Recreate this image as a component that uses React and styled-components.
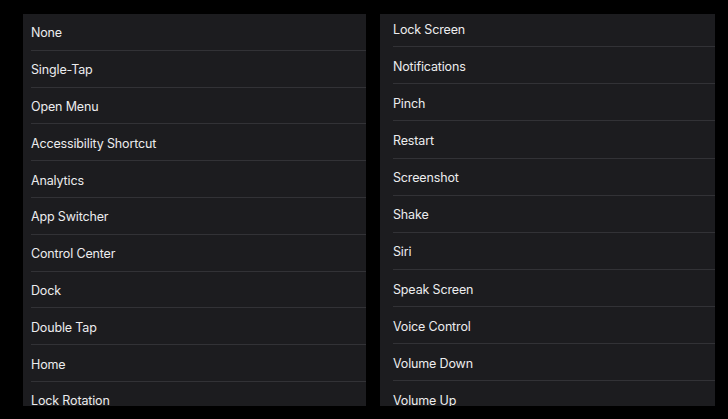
import React from 'react';
import styled, { createGlobalStyle } from 'styled-components';

const leftItems = [
  'None',
  'Single-Tap',
  'Open Menu',
  'Accessibility Shortcut',
  'Analytics',
  'App Switcher',
  'Control Center',
  'Dock',
  'Double Tap',
  'Home',
  'Lock Rotation',
];

const rightItems = [
  'Lock Screen',
  'Notifications',
  'Pinch',
  'Restart',
  'Screenshot',
  'Shake',
  'Siri',
  'Speak Screen',
  'Voice Control',
  'Volume Down',
  'Volume Up',
];

function App() {
  return (
    <>
      <GlobalStyle />
      <Page>
        <Panel $width={343}>
          <List $shift={0}>
            {leftItems.map((label) => (
              <Row key={label} $inset={8} $height={36.8}>
                <Label>{label}</Label>
              </Row>
            ))}
          </List>
        </Panel>
        <Panel $width={335}>
          <List $shift={-4}>
            {rightItems.map((label) => (
              <Row key={label} $inset={13} $height={37.15}>
                <Label>{label}</Label>
              </Row>
            ))}
          </List>
        </Panel>
      </Page>
    </>
  );
}

const GlobalStyle = createGlobalStyle`
  html, body {
    margin: 0;
    padding: 0;
    background: #000;
  }
  body {
    font-family: Inter, "Noto Sans", "Liberation Sans", sans-serif;
    -webkit-font-smoothing: antialiased;
  }
`;

const Page = styled.div`
  width: 728px;
  height: 419px;
  background: #000;
  box-sizing: border-box;
  padding: 14px 0 13px 23px;
  display: flex;
  gap: 14px;
  overflow: hidden;
`;

const Panel = styled.div`
  width: ${(p) => p.$width}px;
  height: 100%;
  background: #1c1c1f;
  overflow: hidden;
`;

const List = styled.div`
  margin-top: ${(p) => p.$shift}px;
  display: flex;
  flex-direction: column;
`;

const Row = styled.div`
  height: ${(p) => p.$height}px;
  flex-shrink: 0;
  margin-left: ${(p) => p.$inset}px;
  display: flex;
  align-items: center;
  border-bottom: 1px solid #323236;
  box-sizing: border-box;
`;

const Label = styled.span`
  font-size: 12.5px;
  color: #ececee;
  letter-spacing: -0.15px;
  padding-top: 2px;
`;

export default App;
